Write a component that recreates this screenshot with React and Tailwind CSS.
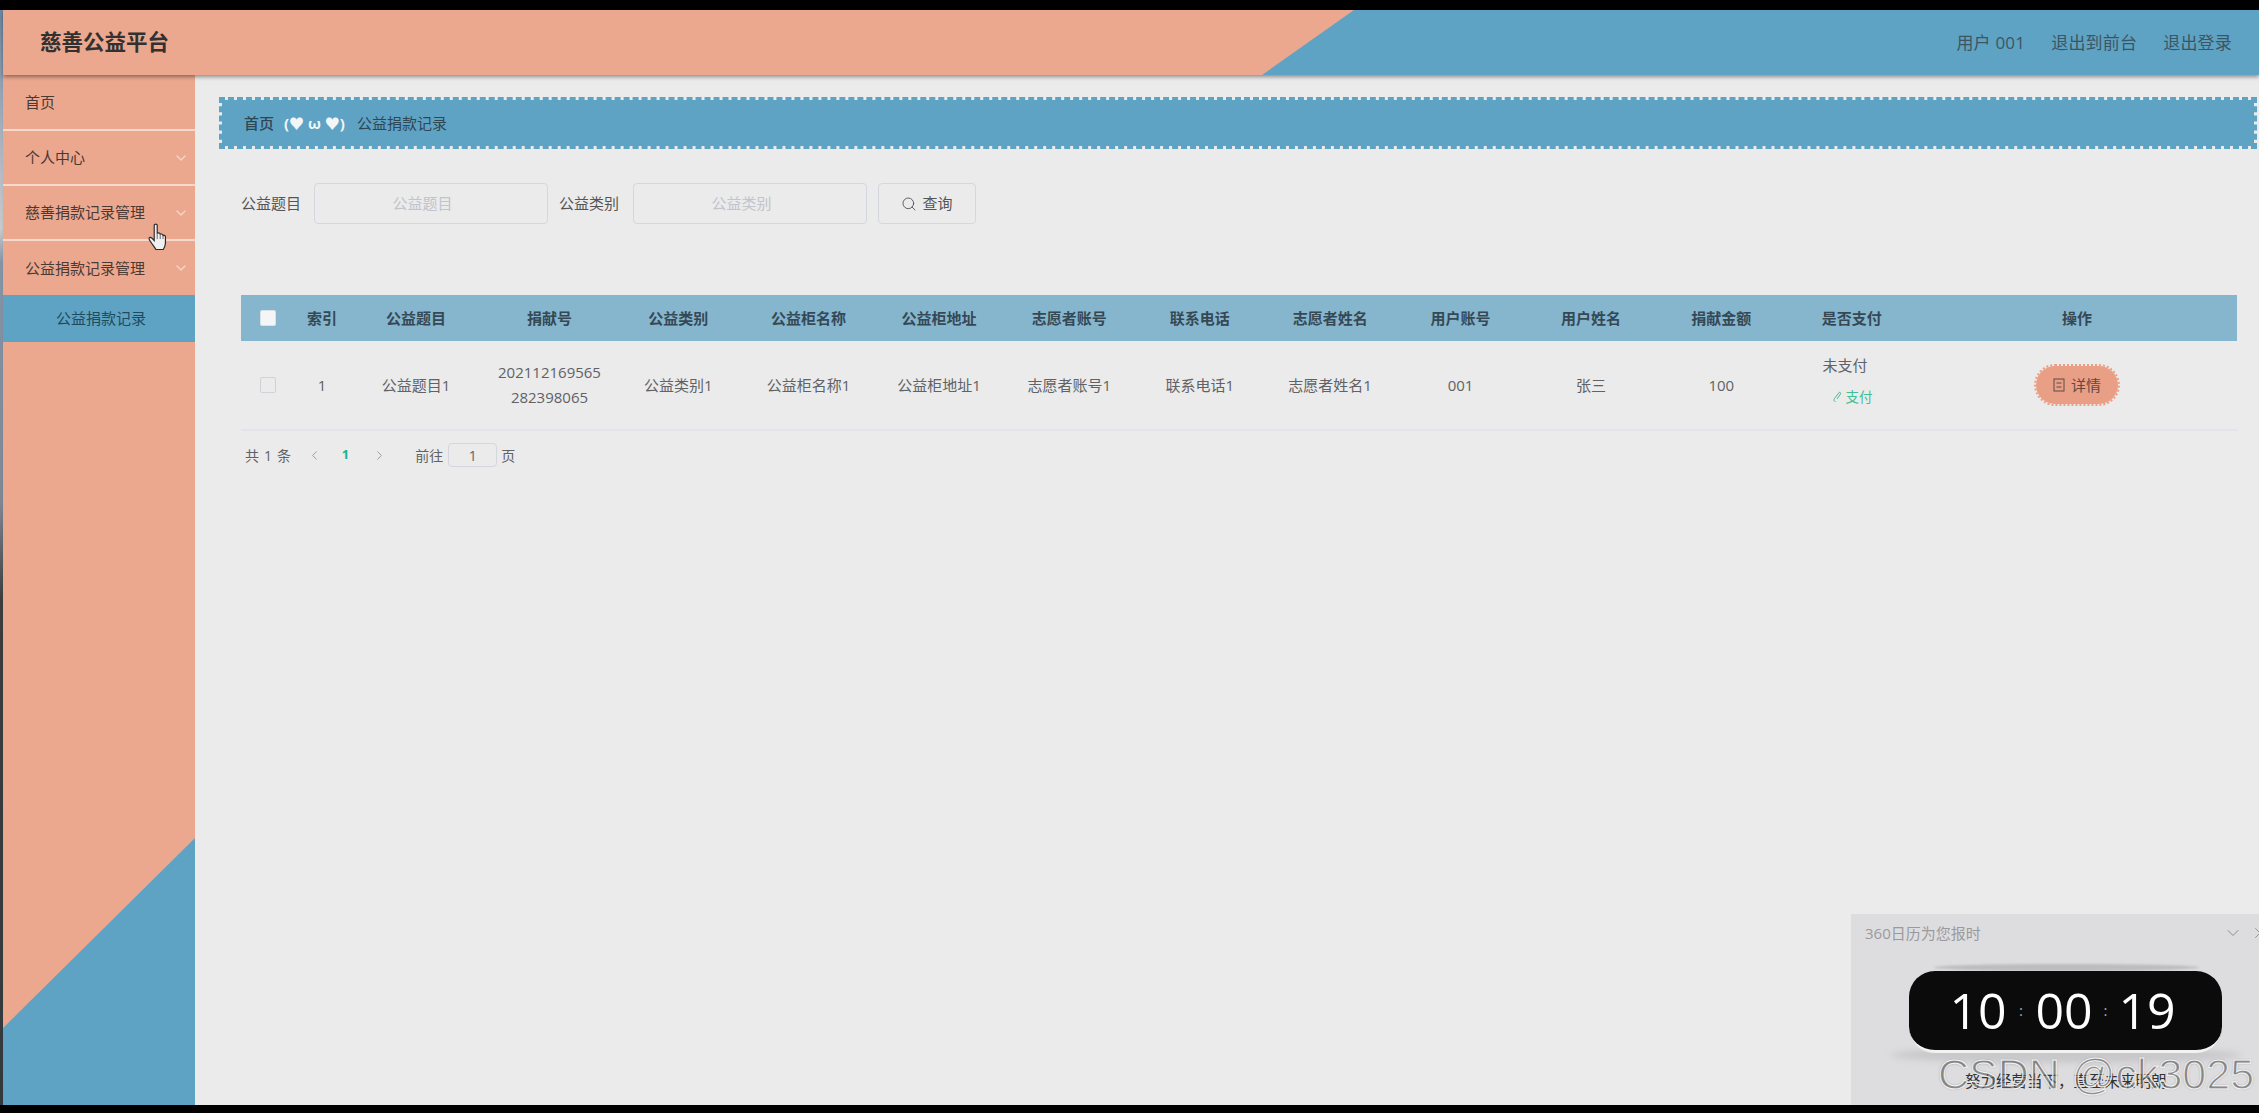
import React from 'react';
import { ChevronDown, ChevronLeft, ChevronRight, Search, X } from 'lucide-react';

const columns = ['公益类别', '公益柜名称', '公益柜地址', '志愿者账号', '联系电话', '志愿者姓名', '用户账号', '用户姓名', '捐献金额'];
const rowValues = ['公益类别1', '公益柜名称1', '公益柜地址1', '志愿者账号1', '联系电话1', '志愿者姓名1', '001', '张三', '100'];
const menu = [
  { name: '个人中心', height: 'h-[55px] border-b-2 border-[#f6d9cd]' },
  { name: '慈善捐款记录管理', height: 'h-[55px] border-b-2 border-[#f6d9cd]' },
  { name: '公益捐款记录管理', height: 'h-[54px]' },
];

const gridCols = 'grid grid-cols-[54px_54px_134px_130px_repeat(10,130.4px)_1fr]';

const HandCursor = () => (
  <svg width="23" height="31" viewBox="0 0 21 29" className="absolute left-[147px] top-[223px]">
    <path
      d="M6.5 2.2c0-1.6 2.8-1.6 2.8 0V10c0-1 2.6-1.2 2.8.2v.8c.2-1 2.4-1 2.6.4v.8c.3-.9 2.2-.8 2.3.6v6c0 2.4-.8 4-2 6H8c-.8-1.8-2.5-3.5-5-7.5C1.8 16 1 14 2.5 13.5c1-.3 2.4 1 4 3Z"
      fill="#f0f0f0"
      stroke="#2b2b2b"
      strokeWidth="1.1"
    />
    <path d="M9.3 10v5M12.1 11v4M14.7 12v3" stroke="#555" strokeWidth="0.8" fill="none" />
  </svg>
);

const ClockPopup = () => (
  <div className="absolute right-0 top-[914px] h-[191px] w-[408px] overflow-hidden bg-[#dddde0]">
    <div className="flex items-center pl-[14px] pr-[2px] pt-[9px]">
      <span className="flex-1 text-[15px] leading-[20px] text-[#9a9a9e]">360日历为您报时</span>
      <ChevronDown size={20} strokeWidth={1.2} className="text-[#8d8d92]" />
      <X size={18} strokeWidth={1.2} className="-mr-[12px] ml-[8px] text-[#8d8d92]" />
    </div>
    <div className="relative ml-[58px] mt-[28px] w-[313px]">
      <div className="absolute -top-[7px] left-[25px] h-[7px] w-[265px] rounded-[50%] bg-[#bcbcbe] blur-[1px]" />
      <div className="absolute -bottom-[10px] -left-[18px] h-[16px] w-[350px] rounded-[50%] bg-[#c8c8cb] blur-[3px]" />
      <div className="relative flex h-[82px] items-center justify-center rounded-[26px] border-b-[3px] border-[#f2f2f2] bg-[#0b0b0c] pr-[6px] font-['Open_Sans',sans-serif] text-[50px] font-normal text-white">
        <span className="w-[60px] text-center">10</span>
        <span className="w-[26px] text-center text-[15px] text-[#a8a8a8]">:</span>
        <span className="w-[60px] text-center">00</span>
        <span className="w-[23px] text-center text-[15px] text-[#a8a8a8]">:</span>
        <span className="w-[60px] text-center">19</span>
      </div>
    </div>
    <p className="mt-[17px] pl-[114px] text-[15.5px] leading-[22px] text-[#333]">努力经营当下，直至未来明朗</p>
  </div>
);

const App = () => {
  return (
    <div className="relative flex h-screen w-screen overflow-hidden bg-black pb-[8px] pt-[10px] font-['Open_Sans','Noto_Sans_CJK_SC',sans-serif] text-[15px] text-[#606266]">
      <div className="w-[3px] shrink-0 bg-[linear-gradient(180deg,#6f89a4_0%,#aab3bf_12%,#c9c9cc_20%,#8494a8_23%,#7f8794_45%,#3c3c3c_54%,#333a3e_100%)]" />

      <div className="flex min-w-0 flex-1 flex-col">
        {/* Header */}
        <header className="z-10 flex h-[65px] shrink-0 bg-[#5fa3c4] shadow-[0_2px_4px_rgba(0,0,0,0.4)]">
          <div className="flex w-[1351px] items-center bg-[#eca88f] pl-[37px] [clip-path:polygon(0_0,100%_0,calc(100%-92px)_100%,0_100%)]">
            <span className="text-[21.5px] font-bold text-[#33312f]">慈善公益平台</span>
          </div>
          <div className="flex flex-1 items-center justify-end gap-[26px] pr-[27px] text-[17px] tracking-[0.2px] text-[#3c5563]">
            <span>用户 001</span>
            <span>退出到前台</span>
            <span>退出登录</span>
          </div>
        </header>

        <div className="flex min-h-0 flex-1">
          {/* Sidebar */}
          <aside className="flex w-[192px] shrink-0 flex-col bg-[#eca88f] text-[#4a3a33] shadow-[1px_0_3px_rgba(0,0,0,0.12)]">
            <div className="flex h-[56px] items-center border-b-2 border-[#f6d9cd] pl-[22px]">首页</div>
            {menu.map((item) => (
              <div key={item.name} className={`flex items-center justify-between pl-[22px] pr-[6px] ${item.height}`}>
                <span>{item.name}</span>
                <ChevronDown size={16} strokeWidth={2} className="text-[#f7d5c7]" />
              </div>
            ))}
            <div className="flex h-[47px] items-center bg-[#5fa3c4] pl-[53px] text-[#204a5e]">公益捐款记录</div>
            <div className="mt-auto h-[267px] bg-[#5fa3c4] [clip-path:polygon(100%_0,100%_100%,0_100%,0_190px)]" />
          </aside>

          {/* Content */}
          <main className="min-w-0 flex-1 bg-[#ebebeb] pt-[22px]">
            <div className="ml-[24px] mr-[2px] flex h-[52px] items-center border-[3px] border-dashed border-[#5fa3c4] bg-[#5fa3c4] bg-clip-padding pl-[22px] text-[#2f4653]">
              <span className="font-medium">首页</span>
              <span className="ml-[10px] font-bold text-[#f2f6f8]">(♥ ω ♥)</span>
              <span className="ml-[12px]">公益捐款记录</span>
            </div>

            <div className="ml-[46px] mt-[34px] flex h-[41px] items-center">
              <span className="w-[73px] text-[#555]">公益题目</span>
              <div className="flex h-full w-[234px] items-center justify-center rounded border border-[#d4d7de] pr-[17px] text-[#c0c4cc]">公益题目</div>
              <span className="ml-[11px] w-[74px] text-[#555]">公益类别</span>
              <div className="flex h-full w-[234px] items-center justify-center rounded border border-[#d4d7de] pr-[17px] text-[#c0c4cc]">公益类别</div>
              <div className="ml-[11px] flex h-full w-[98px] items-center justify-center gap-[5px] rounded border border-[#d4d7de] text-[#555]">
                <Search size={16} strokeWidth={1.4} />
                <span>查询</span>
              </div>
            </div>

            {/* Table */}
            <div className="ml-[46px] mr-[22px] mt-[71px]">
              <div className={`${gridCols} h-[46px] items-center bg-[#85b6ce] font-semibold text-[#354955]`}>
                <div className="flex justify-center">
                  <span className="h-[16px] w-[16px] rounded-[2px] border border-[#dcdfe6] bg-[#f4f5f6]" />
                </div>
                <div className="text-center">索引</div>
                <div className="text-center">公益题目</div>
                <div className="pl-[3px] text-center">捐献号</div>
                {columns.map((col) => (
                  <div key={col} className="text-center">{col}</div>
                ))}
                <div className="text-center">是否支付</div>
                <div className="text-center">操作</div>
              </div>

              <div className={`${gridCols} h-[90px] items-center border-b-2 border-[#e3e4ea]`}>
                <div className="flex justify-center">
                  <span className="h-[16px] w-[16px] rounded-[2px] border border-[#d0d2d8]" />
                </div>
                <div className="text-center">1</div>
                <div className="text-center">公益题目1</div>
                <div className="pl-[3px] text-center leading-[25px]">
                  202112169565
                  <br />
                  282398065
                </div>
                {rowValues.map((val) => (
                  <div key={val} className="text-center">{val}</div>
                ))}
                <div className="pb-[8px] pl-[36px]">
                  <div className="leading-[24px]">未支付</div>
                  <div className="mt-[8px] flex items-center gap-[3px] pl-[8px] text-[13.5px] leading-[24px] text-[#3fbf93]">
                    <svg width="12" height="12" viewBox="0 0 12 12" fill="none" stroke="currentColor" strokeWidth="1">
                      <path d="M8 1.5 3.5 7.5c-1 1.5-.5 3 1 3M8 1.5c1-.5 2 .3 1.5 1.5L6 8" />
                    </svg>
                    <span>支付</span>
                  </div>
                </div>
                <div className="flex justify-center">
                  <div className="flex h-[42px] w-[86px] items-center justify-center gap-[6px] rounded-[21px] border-2 border-dotted border-[#e99f86] bg-[#e99f86] bg-clip-padding text-[#5d4a44]">
                    <svg width="12" height="14" viewBox="0 0 12 14" fill="none" stroke="currentColor" strokeWidth="1">
                      <rect x="1" y="1" width="10" height="12" />
                      <path d="M3.5 5h5M3.5 9h5" />
                    </svg>
                    <span>详情</span>
                  </div>
                </div>
              </div>

              <div className="flex h-[48px] items-center pl-[4px] text-[14px] text-[#606266]">
                <span className="tracking-[0.7px]">共 1 条</span>
                <ChevronLeft size={15} strokeWidth={1.4} className="ml-[15px] text-[#8e9199]" />
                <span className="ml-[20px] text-[13px] font-bold text-[#18b394]">1</span>
                <ChevronRight size={15} strokeWidth={1.4} className="ml-[23px] text-[#8e9199]" />
                <span className="ml-[28px]">前往</span>
                <span className="ml-[5px] flex h-[24px] w-[49px] items-center justify-center rounded border border-[#d4d7de]">1</span>
                <span className="ml-[4px]">页</span>
              </div>
            </div>
          </main>
        </div>
      </div>

      <HandCursor />
      <ClockPopup />

      <span className="absolute left-[1938px] top-[1050px] font-['Liberation_Sans',sans-serif] text-[43px] leading-[48px] text-transparent [-webkit-text-stroke:1px_#f4f4f4] [text-shadow:0_0_2px_rgba(90,90,90,0.7)]">
        CSDN @ck3025
      </span>
    </div>
  );
};

export default App;
